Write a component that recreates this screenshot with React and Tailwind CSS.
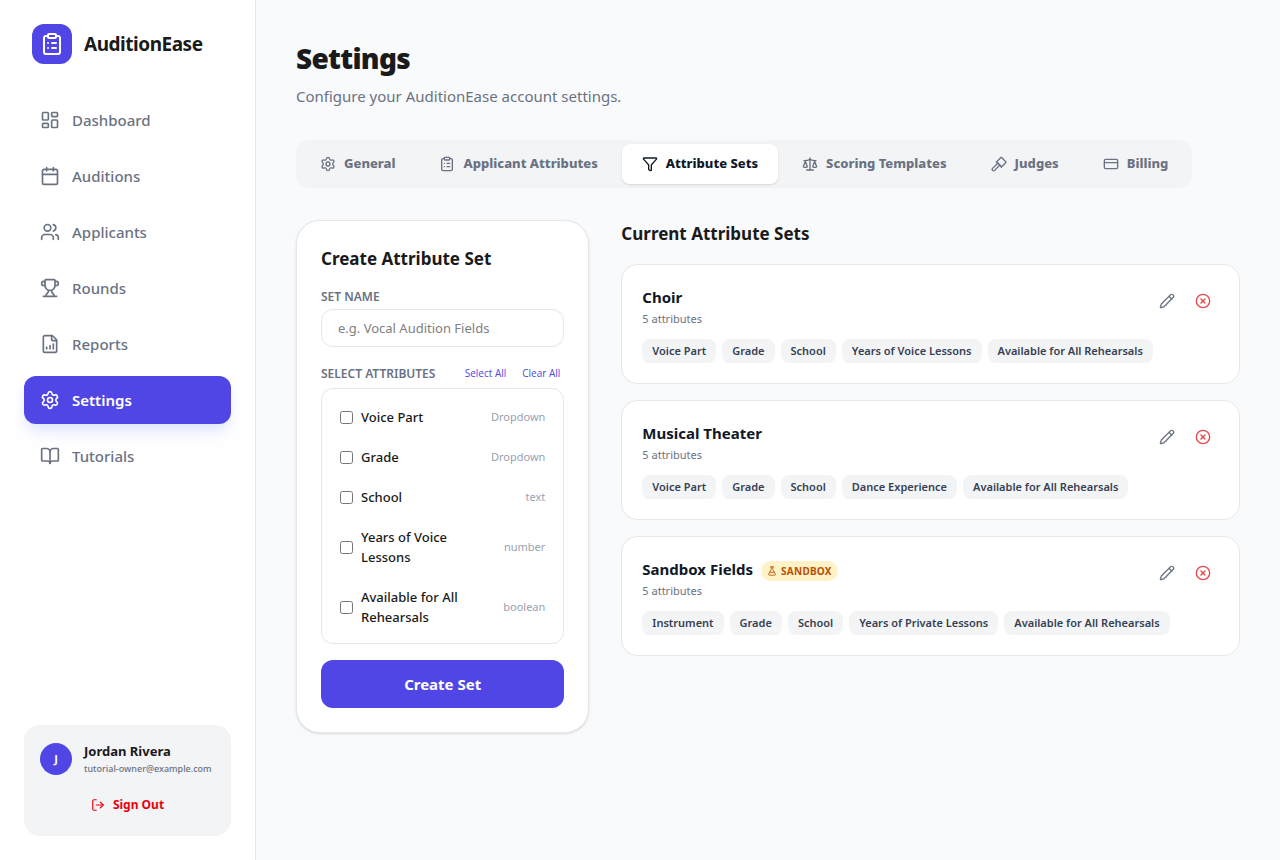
import { useState } from 'react';
import {
  BookOpen,
  Calendar,
  CircleX,
  ClipboardList,
  CreditCard,
  FileChartColumnIncreasing,
  FlaskConical,
  Funnel,
  LayoutDashboard,
  LogOut,
  Pencil,
  Scale,
  Settings,
  Trophy,
  Users,
} from 'lucide-react';

// Short-headed gavel, drawn on the same 24px grid as the lucide icons
function Gavel({ size = 24, strokeWidth = 2 }) {
  return (
    <svg
      width={size}
      height={size}
      viewBox="0 0 24 24"
      fill="none"
      stroke="currentColor"
      strokeWidth={strokeWidth}
      strokeLinecap="round"
      strokeLinejoin="round"
      aria-hidden="true"
    >
      <path d="m13 14-7.6 7.6a2.1 2.1 0 0 1-3-3L10 11" />
      <path d="m8.5 8.5 6-6 1-.5 7 7-.5 1-6.5 6.5z" />
      <path d="m8 8.5 8 8" />
    </svg>
  );
}

const NAV_ITEMS = [
  { label: 'Dashboard', icon: LayoutDashboard },
  { label: 'Auditions', icon: Calendar },
  { label: 'Applicants', icon: Users },
  { label: 'Rounds', icon: Trophy },
  { label: 'Reports', icon: FileChartColumnIncreasing },
  { label: 'Settings', icon: Settings },
  { label: 'Tutorials', icon: BookOpen },
];

const TABS = [
  { label: 'General', icon: Settings },
  { label: 'Applicant Attributes', icon: ClipboardList },
  { label: 'Attribute Sets', icon: Funnel },
  { label: 'Scoring Templates', icon: Scale },
  { label: 'Judges', icon: Gavel },
  { label: 'Billing', icon: CreditCard },
];

const ATTRIBUTES = [
  { name: 'Voice Part', type: 'Dropdown' },
  { name: 'Grade', type: 'Dropdown' },
  { name: 'School', type: 'text' },
  { name: 'Years of Voice Lessons', type: 'number' },
  { name: 'Available for All Rehearsals', type: 'boolean' },
];

const SETS = [
  {
    name: 'Choir',
    fields: ['Voice Part', 'Grade', 'School', 'Years of Voice Lessons', 'Available for All Rehearsals'],
  },
  {
    name: 'Musical Theater',
    fields: ['Voice Part', 'Grade', 'School', 'Dance Experience', 'Available for All Rehearsals'],
  },
  {
    name: 'Sandbox Fields',
    sandbox: true,
    fields: ['Instrument', 'Grade', 'School', 'Years of Private Lessons', 'Available for All Rehearsals'],
  },
];

function Sidebar() {
  return (
    <aside className="sticky top-0 flex h-screen w-64 shrink-0 flex-col border-r border-gray-200 bg-white p-6">
      <div className="mb-8 flex items-center gap-3 px-2">
        <div className="flex h-10 w-10 items-center justify-center rounded-xl bg-[#4f46e5] text-white">
          <ClipboardList size={24} />
        </div>
        <span className="text-[19px] font-bold tracking-tight text-[#1a1a1a]">AuditionEase</span>
      </div>

      <nav className="flex flex-col gap-2">
        {NAV_ITEMS.map(({ label, icon: Icon }) => (
          <a
            key={label}
            href="#"
            className={
              label === 'Settings'
                ? 'flex h-12 items-center gap-3 rounded-xl bg-[#4f46e5] px-4 text-[15px] font-semibold text-white shadow-lg shadow-indigo-100'
                : 'flex h-12 items-center gap-3 rounded-xl px-4 text-[15px] font-medium text-gray-500'
            }
          >
            <Icon size={20} strokeWidth={2} />
            {label}
          </a>
        ))}
      </nav>

      <div className="mt-auto rounded-2xl bg-gray-100 px-4 pt-4 pb-[15px]">
        <div className="mb-3 flex items-center gap-3">
          <div className="flex h-8 w-8 shrink-0 items-center justify-center rounded-full bg-[#4f46e5] text-[11px] font-bold text-white">
            J
          </div>
          <div className="min-w-0">
            <p className="text-[13px] leading-5 font-bold text-[#1a1a1a]">Jordan Rivera</p>
            <p className="text-[9px] leading-4 font-medium whitespace-nowrap text-gray-500">
              tutorial-owner@example.com
            </p>
          </div>
        </div>
        <button className="flex h-8 w-full items-center justify-center gap-2 text-xs font-bold text-red-600">
          <LogOut size={14} />
          Sign Out
        </button>
      </div>
    </aside>
  );
}

function CreateSetCard() {
  const [selected, setSelected] = useState([]);

  const toggle = (name) =>
    setSelected((prev) => (prev.includes(name) ? prev.filter((n) => n !== name) : [...prev, name]));

  return (
    <form
      className="rounded-3xl border border-gray-200 bg-white p-6 shadow-sm"
      onSubmit={(e) => e.preventDefault()}
    >
      <h2 className="mb-4 text-[17px] leading-7 font-bold text-[#1a1a1a]">Create Attribute Set</h2>

      <label htmlFor="set-name" className="mb-1 block text-xs font-semibold text-gray-500">
        SET NAME
      </label>
      <input
        id="set-name"
        type="text"
        placeholder="e.g. Vocal Audition Fields"
        className="h-[38px] w-full rounded-xl border border-gray-200 px-4 text-[13px] placeholder:text-[#808080]"
      />

      <div className="mt-4 mb-1 flex h-[21px] items-center justify-between">
        <span className="text-xs font-semibold text-gray-500">SELECT ATTRIBUTES</span>
        <div className="flex gap-2 font-['Open_Sans','Noto_Sans',sans-serif] text-[10px] font-medium text-[#4f46e5]">
          <button type="button" className="px-1" onClick={() => setSelected(ATTRIBUTES.map((a) => a.name))}>
            Select All
          </button>
          <button type="button" className="px-1" onClick={() => setSelected([])}>
            Clear All
          </button>
        </div>
      </div>

      <div className="space-y-1 rounded-xl border border-gray-200 px-2 pt-2.5 pb-2">
        {ATTRIBUTES.map(({ name, type }) => (
          <label key={name} className="flex items-center gap-2 px-2.5 py-2">
            <input
              type="checkbox"
              className="h-[13px] w-[13px] shrink-0"
              checked={selected.includes(name)}
              onChange={() => toggle(name)}
            />
            <span className="max-w-28 text-[13px] leading-5 font-medium text-[#1a1a1a]">{name}</span>
            <span className="ml-auto pl-2 text-[11px] text-gray-400">{type}</span>
          </label>
        ))}
      </div>

      <button className="mt-4 h-12 w-full rounded-xl bg-[#4f46e5] text-[15px] font-bold text-white">
        Create Set
      </button>
    </form>
  );
}

function SetCard({ name, sandbox, fields }) {
  return (
    <article className="rounded-2xl border border-gray-200 bg-white p-5">
      <div className="flex items-start justify-between">
        <div>
          <div className="flex items-center gap-2">
            <h3 className="text-[15px] leading-6 font-bold text-gray-900">{name}</h3>
            {sandbox && (
              <span className="mt-1 flex items-center gap-1 rounded-full bg-amber-100 px-1.5 text-[10px] leading-5 font-bold tracking-wide text-amber-700">
                <FlaskConical size={10} />
                SANDBOX
              </span>
            )}
          </div>
          <p className="mt-0.5 text-[11px] leading-4 text-gray-500">{fields.length} attributes</p>
        </div>
        <div className="flex gap-1">
          <button aria-label={`Edit ${name}`} className="flex h-8 w-8 items-center justify-center text-gray-500">
            <Pencil size={16} strokeWidth={2} />
          </button>
          <button aria-label={`Delete ${name}`} className="flex h-8 w-8 items-center justify-center text-[#e5484d]">
            <CircleX size={16} strokeWidth={2} />
          </button>
        </div>
      </div>
      <div className="mt-3 flex flex-wrap gap-1.5">
        {fields.map((field) => (
          <span
            key={field}
            className="rounded-lg bg-gray-100 px-2.5 py-1 text-[11px] leading-4 font-semibold text-gray-700"
          >
            {field}
          </span>
        ))}
      </div>
    </article>
  );
}

export default function App() {
  const [activeTab, setActiveTab] = useState('Attribute Sets');

  return (
    <div className="flex min-h-screen bg-gray-50 font-['Noto_Sans','Open_Sans',sans-serif]">
      <Sidebar />

      <main className="min-w-0 flex-1 p-10">
        <header className="mb-8">
          <h1 className="text-[28px] leading-9 font-black tracking-tight text-[#1a1a1a]">Settings</h1>
          <p className="mt-2 text-[15px] leading-6 text-gray-500">Configure your AuditionEase account settings.</p>
        </header>

        <div className="mb-8 flex w-fit gap-1 rounded-xl bg-gray-100 p-1">
          {TABS.map(({ label, icon: Icon }) => (
            <button
              key={label}
              onClick={() => setActiveTab(label)}
              className={
                label === activeTab
                  ? 'flex h-10 items-center gap-2 rounded-lg bg-white px-5 text-[13px] font-extrabold whitespace-nowrap text-gray-900 shadow-sm'
                  : 'flex h-10 items-center gap-2 rounded-lg px-5 text-[13px] font-extrabold whitespace-nowrap text-gray-500'
              }
            >
              <Icon size={16} strokeWidth={2} />
              {label}
            </button>
          ))}
        </div>

        <div className="grid grid-cols-3 items-start gap-8">
          <CreateSetCard />

          <section className="col-span-2">
            <h2 className="mb-4 text-[17px] leading-7 font-bold text-[#1a1a1a]">Current Attribute Sets</h2>
            <div className="flex flex-col gap-4">
              {SETS.map((set) => (
                <SetCard key={set.name} {...set} />
              ))}
            </div>
          </section>
        </div>
      </main>
    </div>
  );
}
